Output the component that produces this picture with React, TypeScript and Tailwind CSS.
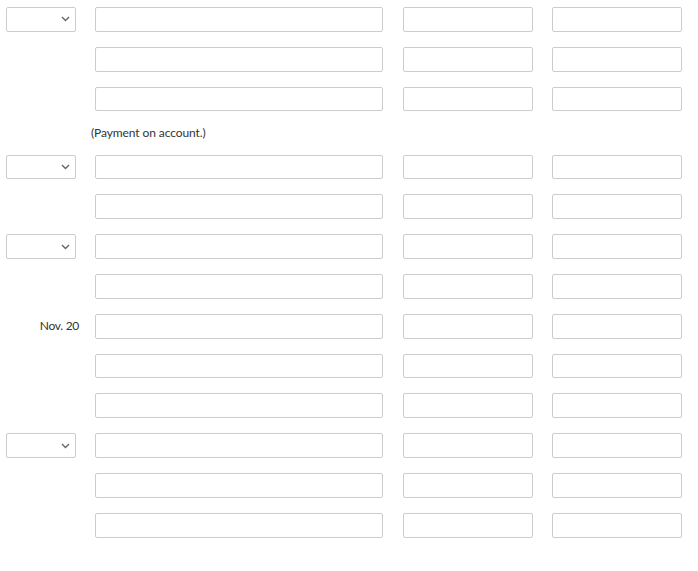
import React from "react";

type Row = { kind: "select" | "label" | "none"; label?: string } | { kind: "note"; text: string };

const rows: Row[] = [
  { kind: "select" },
  { kind: "none" },
  { kind: "none" },
  { kind: "note", text: "(Payment on account.)" },
  { kind: "select" },
  { kind: "none" },
  { kind: "select" },
  { kind: "none" },
  { kind: "label", label: "Nov. 20" },
  { kind: "none" },
  { kind: "none" },
  { kind: "select" },
  { kind: "none" },
  { kind: "none" },
];

function Box({ w }: { w: string }) {
  return <div className={`${w} h-[24.8px] border border-[#cccccc] rounded-[2px] bg-white shrink-0`} />;
}

function Select() {
  return (
    <div className="w-[70px] h-[24.8px] border border-[#cccccc] rounded-[2px] bg-white flex items-center justify-end pr-[5px]">
      <svg width="9" height="6" viewBox="0 0 9 6">
        <path d="M1 1 L4.5 4.5 L8 1" fill="none" stroke="#666666" strokeWidth="1.4" />
      </svg>
    </div>
  );
}

export default function App() {
  return (
    <div className="w-[698px] h-[571px] bg-white pt-[7px] pl-[6px] text-[#333333]" style={{ fontFamily: "Lato, 'Liberation Sans', sans-serif" }}>
      <div className="flex flex-col gap-[15px]">
        {rows.map((r, i) => {
          if (r.kind === "note") {
            return (
              <div key={i} className="flex h-[13.2px] items-center">
                <div className="w-[74px] shrink-0" />
                <div className="ml-[11px] text-[12px] leading-none tracking-[-0.1px]">{r.text}</div>
              </div>
            );
          }
          return (
            <div key={i} className="flex items-center">
              <div className="w-[74px] shrink-0 flex items-center justify-end">
                {r.kind === "select" ? (
                  <div className="w-full flex justify-start"><Select /></div>
                ) : r.kind === "label" ? (
                  <span className="text-[12px] leading-none tracking-[-0.3px] pr-[1px]">{r.label}</span>
                ) : null}
              </div>
              <div className="ml-[15px]"><Box w="w-[288px]" /></div>
              <div className="ml-[20px]"><Box w="w-[130px]" /></div>
              <div className="ml-[19px]"><Box w="w-[130px]" /></div>
            </div>
          );
        })}
      </div>
    </div>
  );
}
